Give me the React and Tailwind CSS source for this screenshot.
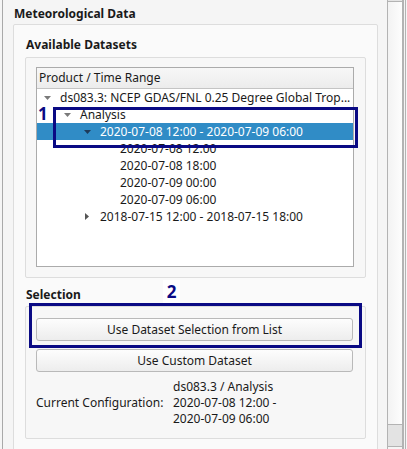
import React from "react";

function Down({ color = "#7a7a7a" }) {
  return (
    <svg width="7" height="4" viewBox="0 0 7 4" className="shrink-0">
      <path d="M0 0 L7 0 L3.5 4 Z" fill={color} />
    </svg>
  );
}
function Right({ color = "#555" }) {
  return (
    <svg width="4" height="7" viewBox="0 0 4 7" className="shrink-0 ml-[1px]">
      <path d="M0 0 L4 3.5 L0 7 Z" fill={color} />
    </svg>
  );
}

function Row({ indent, arrow, text, selected }) {
  return (
    <div
      className={
        "flex items-center h-[17px] whitespace-nowrap " +
        (selected ? "bg-[#308cc6] text-white" : "text-[#1a1a1a]")
      }
    >
      <div style={{ width: indent }} className="shrink-0" />
      <div className="w-[16px] shrink-0 flex items-center justify-start">
        {arrow === "down" && <Down color={selected ? "#1e3a5a" : "#7a7a7a"} />}
        {arrow === "right" && <Right />}
      </div>
      <span>{text}</span>
    </div>
  );
}

function Button({ children }) {
  return (
    <div className="h-[23px] w-[317px] rounded-[3px] border border-[#b9b9b9] bg-gradient-to-b from-[#fdfdfd] to-[#ededed] flex items-center justify-center text-[#1a1a1a]">
      {children}
    </div>
  );
}

export default function App() {
  return (
    <div
      className="relative w-[407px] h-[449px] overflow-hidden bg-[#f5f5f5] flex text-[12px] leading-[16px]"
      style={{ fontFamily: '"Noto Sans", "Open Sans", sans-serif' }}
    >
      <div className="w-[2px] shrink-0" />
      <div className="w-[385px] shrink-0 border-l border-[#a9a9a9] flex flex-col">
        <div className="mt-[6px] ml-[11px] h-[16px] font-bold text-[#1a1a1a]">Meteorological Data</div>
        <div className="mt-[2px] ml-[10px] w-[365px] h-[460px] shrink-0 border border-[#dddddd] rounded-[2px] bg-[#fafafa] flex flex-col">
          <div className="mt-[12px] ml-[12px] h-[16px] font-bold text-[#1a1a1a]">Available Datasets</div>
          <div className="mt-[4px] ml-[11px] w-[341px] border border-[#dddddd] rounded-[2px] bg-[#f7f7f7] pt-[9px] pl-[10px] pb-[10px]">
            <div className="w-[318px] h-[200px] border border-[#ababab] bg-white flex flex-col overflow-hidden">
              <div className="h-[21px] shrink-0 border-b border-[#c4c4c4] bg-gradient-to-b from-[#f7f7f7] to-[#ececec] flex items-center pl-[2px] text-[#1a1a1a]">
                Product / Time Range
              </div>
              <Row indent={7} arrow="down" text="ds083.3: NCEP GDAS/FNL 0.25 Degree Global Trop..." />
              <Row indent={27} arrow="down" text="Analysis" />
              <Row indent={47} arrow="down" text="2020-07-08 12:00 - 2020-07-09 06:00" selected />
              <Row indent={67} text="2020-07-08 12:00" />
              <Row indent={67} text="2020-07-08 18:00" />
              <Row indent={67} text="2020-07-09 00:00" />
              <Row indent={67} text="2020-07-09 06:00" />
              <Row indent={47} arrow="right" text="2018-07-15 12:00 - 2018-07-15 18:00" />
            </div>
          </div>
          <div className="mt-[9px] ml-[12px] h-[16px] font-bold text-[#1a1a1a]">Selection</div>
          <div className="mt-[3px] ml-[11px] w-[341px] border border-[#dddddd] rounded-[2px] bg-[#f7f7f7] pt-[11px] pl-[10px] pb-[11px]">
            <div className="flex flex-col gap-[8px]">
              <Button>Use Dataset Selection from List</Button>
              <Button>Use Custom Dataset</Button>
            </div>
            <div className="mt-[7px] flex items-center text-[#1a1a1a]">
              <div className="w-[137px] shrink-0">Current Configuration:</div>
              <div className="flex flex-col">
                <div>ds083.3 / Analysis</div>
                <div>2020-07-08 12:00 -</div>
                <div>2020-07-09 06:00</div>
              </div>
            </div>
          </div>
        </div>
      </div>
      {/* scrollbar */}
      <div className="w-[16px] shrink-0 h-[449px] border-x border-[#b3b3b3] flex flex-col">
        <div className="h-[2px] border-b border-[#b3b3b3] bg-[#e4e4e4]" />
        <div className="flex-1 bg-gradient-to-r from-[#f3f3f3] to-[#fdfdfd]" />
        <div className="h-[23px] border-y border-[#b3b3b3] bg-[#e3e3e3]" />
        <div className="h-[2px]" />
      </div>
      <div className="w-[1px] shrink-0 bg-[#b3b3b3]" />
      <div className="w-[1px] shrink-0" />
      <div className="w-[1px] shrink-0 bg-[#b3b3b3]" />

      {/* annotations */}
      <div className="absolute left-[53px] top-[107px] w-[305px] h-[41px] border-[3px] border-[#0a0a84]" />
      <div className="absolute left-[38px] top-[103px] text-[17px] leading-[22px] font-bold text-[#0a0a84]">1</div>
      <div className="absolute left-[29px] top-[303px] w-[333px] h-[45px] border-[3px] border-[#0a0a84]" />
      <div className="absolute left-[163px] top-[280px] w-[17px] h-[23px] bg-white flex items-center justify-center text-[17px] leading-[22px] font-bold text-[#0a0a84]">2</div>
    </div>
  );
}
